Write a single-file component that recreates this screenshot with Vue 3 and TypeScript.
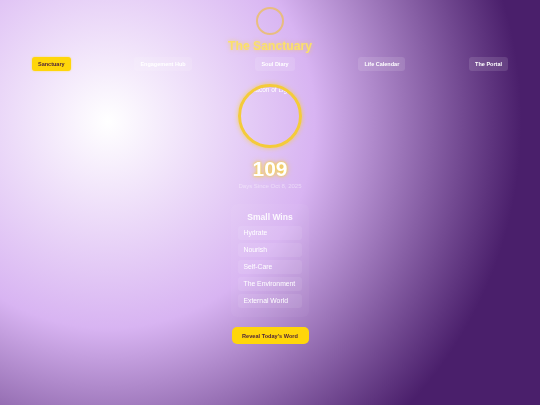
<script setup lang="ts">
const nav: string[] = ['Sanctuary', 'Engagement Hub', 'Soul Diary', 'Life Calendar', 'The Portal']
const wins: string[] = ['Hydrate', 'Nourish', 'Self-Care', 'The Environment', 'External World']
</script>

<template>
  <div class="page">
    <header class="head">
      <div class="logo"></div>
      <h1 class="title">The Sanctuary</h1>
    </header>
    <nav class="nav">
      <button v-for="(n, i) in nav" :key="n" class="tab" :class="{ on: i === 0 }">{{ n }}</button>
    </nav>
    <div class="beacon"><span class="beacon-text">Beacon of Light</span></div>
    <div class="count">109</div>
    <div class="since">Days Since Oct 8, 2025</div>
    <section class="wins">
      <h2 class="wins-title">Small Wins</h2>
      <div v-for="w in wins" :key="w" class="win">{{ w }}</div>
    </section>
    <button class="reveal">Reveal Today's Word</button>
  </div>
</template>

<style scoped>
.page {
  width: 540px;
  height: 405px;
  overflow: hidden;
  box-sizing: border-box;
  padding-top: 7px;
  display: flex;
  flex-direction: column;
  align-items: center;
  font-family: "Liberation Sans", Arial, sans-serif;
  background: radial-gradient(circle at 20% 30%, #ffffff 0%, #d8b4f2 40%, #4a1f6b 80%);
}
.head { display: flex; flex-direction: column; align-items: center; }
.logo {
  width: 24px;
  height: 24px;
  border: 2px solid rgba(236, 190, 90, 0.75);
  border-radius: 50%;
  filter: blur(0.45px);
}
.title {
  margin: 4px 0 0;
  font-size: 12.2px;
  line-height: 15px;
  font-weight: 700;
  color: #fbe06a;
  text-shadow: 0 0 4px rgba(255, 215, 0, 0.5);
  filter: blur(0.5px);
}
.nav {
  align-self: stretch;
  margin-top: 3px;
  padding: 0 32px;
  display: flex;
  justify-content: space-between;
}
.tab {
  height: 14px;
  padding: 0 6px;
  border: 0;
  border-radius: 3px;
  font: 700 5.5px "Liberation Sans", Arial, sans-serif;
  color: #fff;
  background: rgba(255, 255, 255, 0.12);
  filter: blur(0.45px);
}
.tab.on { background: #ffd60a; color: #4a1f3b; box-shadow: 0 0 2px rgba(255, 215, 0, 0.6); }
.beacon {
  box-sizing: border-box;
  width: 64px;
  height: 64px;
  margin-top: 13px;
  border: 3px solid #f4cb3a;
  border-radius: 50%;
  box-shadow: 0 0 5px rgba(255, 215, 0, 0.6);
  overflow: hidden;
  text-align: center;
  filter: blur(0.45px);
}
.beacon-text {
  display: block;
  margin-top: -1px;
  font-size: 6.5px;
  line-height: 7px;
  color: #fff;
  white-space: nowrap;
}
.count {
  margin-top: 9px;
  font-size: 21px;
  line-height: 24px;
  font-weight: 700;
  color: #fff;
  text-shadow: 0 0 3px rgba(255, 215, 0, 0.9), 0 0 6px rgba(255, 215, 0, 0.6);
  filter: blur(0.45px);
}
.since {
  margin-top: 1px;
  font-size: 6px;
  line-height: 8px;
  color: rgba(255, 255, 255, 0.45);
  filter: blur(0.45px);
}
.wins {
  margin-top: 14px;
  width: 64px;
  padding: 8px 7px 9px;
  border-radius: 6px;
  background: rgba(255, 255, 255, 0.04);
  display: flex;
  flex-direction: column;
  align-items: stretch;
  gap: 3px;
  filter: blur(0.45px);
}
.wins-title {
  margin: 0 0 1px;
  font-size: 8.5px;
  line-height: 10px;
  font-weight: 700;
  text-align: center;
  color: rgba(255, 255, 255, 0.9);
  white-space: nowrap;
}
.win {
  height: 14px;
  padding: 0 5.5px;
  border-radius: 3px;
  font-size: 6.8px;
  line-height: 14px;
  white-space: nowrap;
  color: #fff;
  background: rgba(255, 255, 255, 0.08);
}
.reveal {
  margin-top: 10px;
  width: 77px;
  height: 17px;
  padding: 0;
  border: 0;
  border-radius: 5px;
  font: 700 5.6px "Liberation Sans", Arial, sans-serif;
  color: #4a1f3b;
  background: #ffd60a;
  filter: blur(0.4px);
}
</style>
